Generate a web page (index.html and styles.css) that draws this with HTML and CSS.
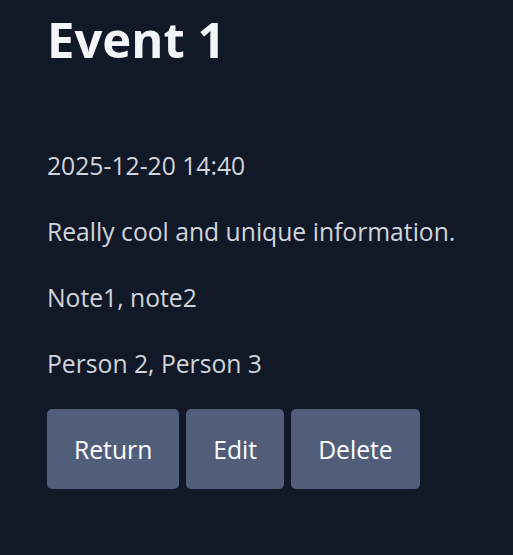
FILE: index.html
```html
<!DOCTYPE html>
<html>
<head>
<meta charset="utf-8">
<link rel="stylesheet" href="styles.css">
</head>
<body>
<main class="page">
  <h1 class="title">Event 1</h1>
  <p class="line date">2025-12-20 14:40</p>
  <p class="line">Really cool and unique information.</p>
  <p class="line">Note1, note2</p>
  <p class="line">Person 2, Person 3</p>
  <div class="actions">
    <button class="btn">Return</button>
    <button class="btn">Edit</button>
    <button class="btn">Delete</button>
  </div>
</main>
</body>
</html>
```
FILE: styles.css
```css
html, body {
  margin: 0;
  background: #111827;
  height: 100%;
}
.page {
  padding: 0 0 0 47px;
  font-family: "Open Sans", "Noto Sans", sans-serif;
  color: #d1d5db;
}
.title {
  margin: 0;
  padding-top: 7px;
  font-size: 49px;
  line-height: 64px;
  font-weight: 700;
  color: #f3f4f6;
}
.line {
  margin: 0 0 30px;
  font-size: 24.7px;
  line-height: 36px;
}
.date {
  margin-top: 77px;
}
.actions {
  display: flex;
  gap: 7px;
  margin-top: -3px;
}
.btn {
  background: #515e7a;
  color: #ffffff;
  border: none;
  border-radius: 5px;
  height: 80px;
  padding: 0 27px;
  font-family: "Open Sans", "Noto Sans", sans-serif;
  font-size: 24.7px;
}
```
